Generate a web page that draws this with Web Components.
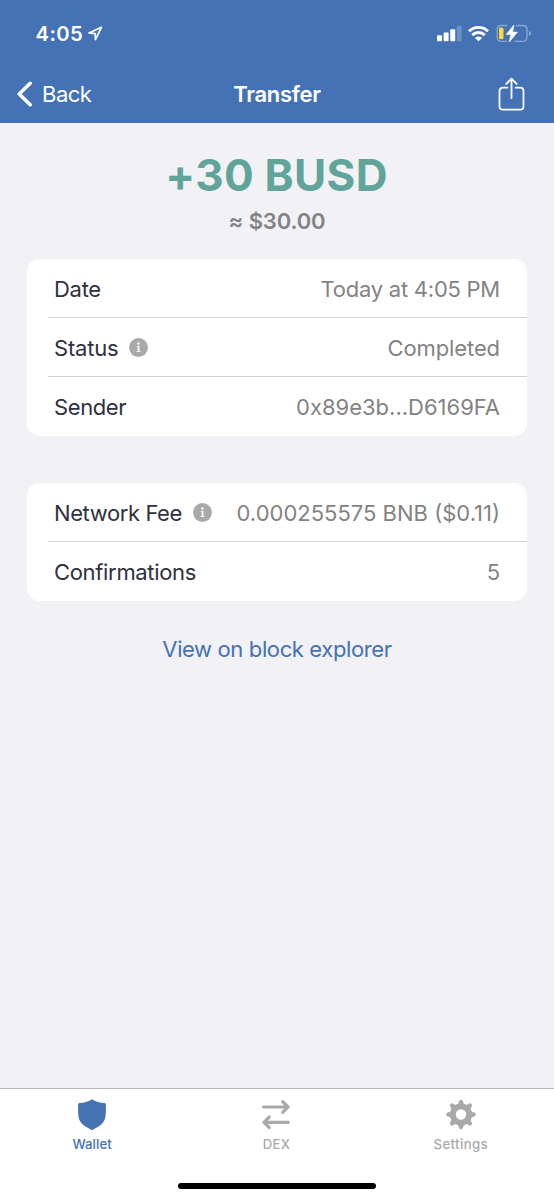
<!DOCTYPE html>
<html lang="en">
<head>
<meta charset="utf-8">
<title>Transfer</title>
<style>
html,body{margin:0;height:100%}
body{font-family:Inter,"Liberation Sans",sans-serif;background:#f1f1f6}
</style>
</head>
<body>
<wallet-app></wallet-app>
<script>
const define = (name, html, setup) => customElements.define(name, class extends HTMLElement {
  constructor() {
    super();
    const t = document.createElement('template');
    t.innerHTML = html;
    this.attachShadow({ mode: 'open' }).append(t.content.cloneNode(true));
  }
  connectedCallback() { if (setup) setup(this); }
});

define('status-bar', `
<style>
:host{display:flex;align-items:center;height:66px;box-sizing:border-box;padding:0 22px 0 35.5px}
.time{font-size:20.3px;font-weight:600;line-height:24px;letter-spacing:.4px;padding-top:1px}
svg{display:block;flex:none}
.loc{margin-left:5px}
.sig{margin-left:auto}
.wifi{margin-left:6px}
.bat{margin-left:6px}
</style>
<span class="time">4:05</span>
<svg class="loc" width="15" height="15" viewBox="0 0 15 15" fill="none" stroke="#fff" stroke-width="1.700" stroke-linejoin="round"><path d="M13.400 1.300 1 7l6.200.7.2 6z"/></svg>
<svg class="sig" width="25" height="17" viewBox="0 0 25 17" fill="#fff"><rect x="0" y="10.200" width="5" height="6" rx="1"/><rect x="6.600" y="7.500" width="5" height="8.700" rx="1"/><rect x="13.200" y="4.200" width="5" height="12" rx="1"/><rect x="19.800" y=".8" width="4.800" height="15.400" rx="1" opacity=".22"/></svg>
<svg class="wifi" width="21" height="17" viewBox="0 0 21 17" fill="none" stroke="#fff" stroke-width="2.900"><path d="M1 6.200a13.600 13.600 0 0 1 19 0"/><path d="M4.300 10.100a8.800 8.800 0 0 1 12.400 0"/><path d="M10.500 16.300 7 12.900a5 5 0 0 1 7 0z" fill="#fff" stroke="none"/></svg>
<svg class="bat" width="37" height="19" viewBox="0 0 37 19"><path d="M12.200 1.500H6.200Q2.200 1.500 2.200 5.500v7.800q0 4 4 4h5.700M21 1.500h7q4 0 4 4v7.800q0 4-4 4h-8.500" fill="none" stroke="#fff" stroke-opacity=".38" stroke-width="1.300"/><path d="M34 7v5q2-.7 2-2.500t-2-2.500z" fill="#fff" opacity=".42"/><rect x="4" y="3.600" width="4.500" height="11.700" rx="1.600" fill="#ffd83d"/><path d="M19 1 11.300 10.400h4.600L14.300 18l8.100-9.900h-4.900z" fill="#fff" stroke="#fff" stroke-width=".7" stroke-linejoin="round"/></svg>
`);

define('nav-bar', `
<style>
:host{display:grid;grid-template-columns:1fr auto 1fr;align-items:center;height:57px;box-sizing:border-box;padding:0 29px 2px 17px;font-size:22px;line-height:28px}
svg{display:block}
.back{display:flex;align-items:center;gap:9px}
.back span{letter-spacing:-.5px}
.title{font-weight:600;letter-spacing:-.3px;margin-left:12px}
.share{justify-self:end}
</style>
<div class="back"><svg width="16" height="26" viewBox="0 0 16 26" fill="none" stroke="#fff" stroke-width="3.500" stroke-linecap="round" stroke-linejoin="round"><path d="M13.200 2.300 2.200 13l11 10.700"/></svg><span>Back</span></div>
<span class="title">Transfer</span>
<svg class="share" width="27" height="34" viewBox="0 0 27 34" fill="none" stroke="#fff" stroke-width="1.800" stroke-linecap="round" stroke-linejoin="round"><path d="M9.300 10.700H5q-3.500 0-3.500 3.500v15q0 3.500 3.500 3.500h17q3.500 0 3.500-3.500v-15q0-3.500-3.500-3.500h-4.300M13.500 21V2M8.300 6.900l5.200-5.300 5.200 5.300"/></svg>
`);

define('amount-header', `
<style>
:host{display:flex;flex-direction:column;align-items:center;height:136px;box-sizing:border-box;padding:26px 1px 0 0}
.amount{font-size:44px;font-weight:700;line-height:53px;color:#61a59a;letter-spacing:.3px}
.fiat{font-size:22px;font-weight:600;line-height:28px;margin-top:5px;padding-left:1px;color:#838385;letter-spacing:-.15px}
</style>
<div class="amount"><slot name="amount"></slot></div>
<div class="fiat"><slot></slot></div>
`);

define('info-dot', `
<style>:host{display:block;width:19px;height:19px}svg{display:block}</style>
<svg width="19" height="19" viewBox="0 0 19 19"><circle cx="9.500" cy="9.500" r="9.400" fill="#a9a9a9"/><circle cx="9.400" cy="5.600" r="1.250" fill="#fff"/><path d="M7.900 7.900h2.500v5h.9v1H7.700v-1h1V8.900h-.8z" fill="#fff"/></svg>
`);

define('detail-card', `
<style>:host{display:block;margin:0 27px;background:#fff;border-radius:13px;overflow:hidden}</style><slot></slot>
`);

define('detail-row', `
<style>
:host{display:block;padding-left:21px;font-size:22px;line-height:28px}
.row{display:flex;align-items:center;height:59px;box-sizing:border-box;padding:2px 27px 0 6px;border-bottom:1px solid #d3d3d6}
:host(:last-child) .row{border-bottom-color:transparent}
.label{color:#30303f;letter-spacing:var(--label-ls,0)}
.value{margin-left:auto;color:#838383;letter-spacing:var(--value-ls,0);white-space:nowrap}
::slotted(info-dot){margin:0 0 1px 11px}
</style>
<div class="row"><span class="label"></span><slot name="info"></slot><span class="value"><slot></slot></span></div>
`, el => { el.shadowRoot.querySelector('.label').textContent = el.getAttribute('label'); });

define('explorer-link', `
<style>:host{display:block;margin-top:34px;text-align:center;font-size:22px;line-height:28px;letter-spacing:-.38px;color:#4472b3}</style><slot></slot>
`);

define('tab-item', `
<style>
:host{display:flex;flex-direction:column;align-items:center;flex:1;padding-top:9px;color:#a9a9a9;font-size:13.200px;font-weight:500;line-height:18px;letter-spacing:var(--ls,.1px)}
:host([active]){color:#4472b3}
::slotted(svg){display:block;margin-bottom:4px}
</style>
<slot name="icon"></slot><span><slot></slot></span>
`);

define('tab-bar', `
<style>
:host{display:flex;flex-direction:column;height:112px;box-sizing:border-box;background:#fff;border-top:1px solid #b9b9be}
.tabs{display:flex;height:93.500px;padding-right:1px}
.home{width:198px;height:6.500px;border-radius:4px;background:#000;margin:0 auto}
</style>
<div class="tabs"><slot></slot></div><div class="home"></div>
`);

define('wallet-app', `
<style>
:host{display:flex;flex-direction:column;height:1200px}
header{background:#4472b5;color:#fff;height:123px}
main{flex:1}
detail-card + detail-card{margin-top:47px}
</style>
<header><status-bar></status-bar><nav-bar></nav-bar></header>
<main>
<amount-header><span slot="amount">+30 BUSD</span>≈ $30.00</amount-header>
<detail-card>
<detail-row label="Date" style="--label-ls:-.3px;--value-ls:-.25px">Today at 4:05 PM</detail-row>
<detail-row label="Status" style="--label-ls:-.2px;--value-ls:-.1px"><info-dot slot="info"></info-dot>Completed</detail-row>
<detail-row label="Sender" style="--label-ls:-.4px">0x89e3b...D6169FA</detail-row>
</detail-card>
<detail-card>
<detail-row label="Network Fee" style="--label-ls:-.4px"><info-dot slot="info"></info-dot>0.000255575 BNB ($0.11)</detail-row>
<detail-row label="Confirmations" style="--label-ls:-.33px">5</detail-row>
</detail-card>
<explorer-link>View on block explorer</explorer-link>
</main>
<tab-bar>
<tab-item active><svg slot="icon" width="30" height="33" viewBox="0 0 30 33" fill="#4472b3"><path d="M15 1.200c4 2.700 8 3.700 12.500 3.700q1.400 0 1.400 1.500c0 8 .2 13-2.200 17.200-2.300 4-7 6-11.700 8.600C10.300 29.600 5.600 27.600 3.300 23.600.9 19.400 1.100 14.400 1.100 6.400q0-1.500 1.400-1.500C7 4.900 11 3.900 15 1.200z"/></svg>Wallet</tab-item>
<tab-item style="--ls:.2px"><svg slot="icon" width="30" height="33" viewBox="0 0 30 33" fill="none" stroke="#a9a9a9" stroke-width="3.200" stroke-linecap="round" stroke-linejoin="round"><path d="M2.500 9H26M21.700 3.700 27 9l-5.300 5.300M27.300 24.300H4M8.300 19 3 24.300l5.300 5.300"/></svg>DEX</tab-item>
<tab-item style="--ls:.4px"><svg slot="icon" width="30" height="33" viewBox="-15 -16.500 30 33" fill="#a9a9a9"><path fill-rule="evenodd" d="M0-11a11 11 0 1 0 0 22a11 11 0 1 0 0-22zM0-5.200a5.200 5.200 0 1 1 0 10.400a5.200 5.200 0 1 1 0-10.400z"/><g id="teeth"></g></svg>Settings</tab-item>
</tab-bar>
`, el => {
  const g = el.shadowRoot.querySelector('#teeth');
  for (let i = 0; i < 8; i++) {
    const p = document.createElementNS('http://www.w3.org/2000/svg', 'path');
    p.setAttribute('d', 'M-4.600-9.200C-2.900-10-2.400-11-2.200-12.800Q-1.900-14.800 0-14.800T2.200-12.800C2.400-11 2.900-10 4.600-9.200z');
    p.setAttribute('transform', 'rotate(' + i * 45 + ')');
    g.append(p);
  }
});
</script>
</body>
</html>
